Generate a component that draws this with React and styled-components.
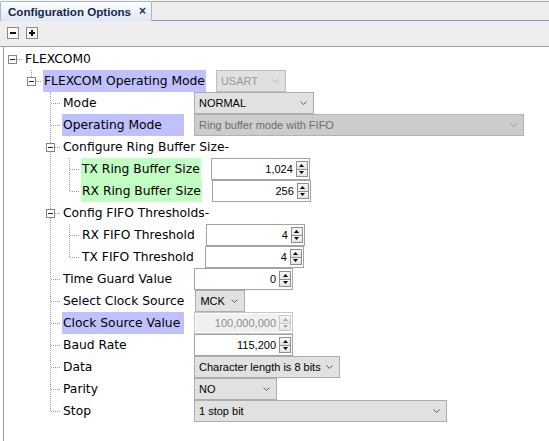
import React from "react"
import styled, { createGlobalStyle } from "styled-components"

const LINE = "#9b9b9b"

const GlobalStyle = createGlobalStyle`
  html, body {
    margin: 0;
    padding: 0;
    background: #fff;
  }
  body {
    font-family: "DejaVu Sans", Verdana, sans-serif;
  }
`

const Window = styled.div`
  width: 549px;
  height: 441px;
  overflow: hidden;
  background: #fff;
  display: flex;
  flex-direction: column;
`

const TabBar = styled.div`
  display: flex;
  height: 21px;
  padding-top: 1px;
  box-sizing: border-box;
  background: #f4f4f4;
`

const Tab = styled.div`
  display: flex;
  align-items: center;
  gap: 8px;
  height: 20px;
  box-sizing: border-box;
  padding: 0 5px 1px 7px;
  border: 1px solid #a7b7cf;
  border-bottom: none;
  border-radius: 2px 2px 0 0;
  background: linear-gradient(#fdfeff, #dfe7f3);
  font: bold 11.6px "Liberation Sans", Arial, sans-serif;
  color: #15284d;
  white-space: nowrap;
`

const Close = styled.span`
  font-size: 12px;
  color: #24324f;
`

const TabFill = styled.div`
  flex: 1;
  height: 20px;
  box-sizing: border-box;
  background: #eeeeee;
  border-top: 1px solid #a9a9a9;
  border-bottom: 1px solid #7d9cc2;
`

const Toolbar = styled.div`
  display: flex;
  align-items: flex-start;
  gap: 7px;
  height: 26px;
  box-sizing: border-box;
  padding: 6px 0 0 7px;
  background: #eeeeee;
  border-bottom: 1px solid #a0a0a0;
`

const ToolButton = styled.button`
  width: 12px;
  height: 12px;
  padding: 0;
  border: 1px solid #8a8a8a;
  background: #fbfbfb;
  display: grid;
  place-items: center;
  box-sizing: border-box;
`

const TreePanel = styled.div`
  flex: 1;
  margin-left: 3px;
  padding-top: 1px;
  border-left: 1px solid #8da2bf;
  background: #fff;
  display: flex;
  flex-direction: column;
`

const Row = styled.div`
  display: flex;
  height: 22px;
  flex: none;
`

const guideBg = (kind) => {
  const v = (len) =>
    `repeating-linear-gradient(to bottom, ${LINE} 0 1px, transparent 1px 2px) 8px 0 / 1px ${len}px no-repeat`
  const h = (from) =>
    `repeating-linear-gradient(to right, ${LINE} 0 1px, transparent 1px 2px) ${from}px 11px / ${19 - from}px 1px no-repeat`
  switch (kind) {
    case "l":
      return v(22)
    case "t":
      return `${h(9)}, ${v(22)}`
    case "e":
      return `${h(9)}, ${v(12)}`
    case "T":
      return `${h(13)}, ${v(22)}`
    case "E":
      return `${h(13)}, ${v(7)}`
    case "R":
      return h(13)
    default:
      return "none"
  }
}

const Guide = styled.span`
  flex: none;
  width: 19px;
  display: flex;
  align-items: flex-start;
  background: ${({ $kind }) => guideBg($kind)};
`

const ToggleBox = styled.svg`
  flex: none;
  margin: 7px 0 0 4px;
`

const Label = styled.span`
  flex: none;
  display: flex;
  align-items: center;
  box-sizing: border-box;
  min-width: ${({ $min }) => $min}px;
  margin-left: 1px;
  padding: 0 1px;
  background: ${({ $tint }) => $tint || "transparent"};
  font-size: 12.3px;
  color: #000;
  white-space: nowrap;
`

const tones = {
  normal: { bg: "#e1e1e1", border: "#adadad", color: "#000", arrow: "#5a5a5a" },
  muted: { bg: "#e0e0e0", border: "#bdbdbd", color: "#9a9a9a", arrow: "#b4b4b4" },
  dim: { bg: "#cccccc", border: "#b3b3b3", color: "#6e6e6e", arrow: "#9c9c9c" },
}

const SelectBox = styled.div`
  flex: none;
  width: ${({ $w }) => $w}px;
  height: 22px;
  margin-left: 10px;
  box-sizing: border-box;
  display: flex;
  align-items: center;
  justify-content: space-between;
  padding: 0 6px 0 4px;
  border: 1px solid ${({ $tone }) => tones[$tone].border};
  background: ${({ $tone }) => tones[$tone].bg};
  color: ${({ $tone }) => tones[$tone].color};
  font: 11px "Liberation Sans", Arial, sans-serif;
  white-space: nowrap;
`

const SpinBox = styled.div`
  flex: none;
  width: 99px;
  height: 22px;
  margin-left: 10px;
  box-sizing: border-box;
  display: flex;
  border: 1px solid ${({ $disabled }) => ($disabled ? "#c6c6c6" : "#a3a3a3")};
  background: #fff;
  font: 11px "Liberation Sans", Arial, sans-serif;
`

const SpinField = styled.span`
  flex: 1;
  display: flex;
  align-items: center;
  justify-content: flex-end;
  margin: ${({ $disabled }) => ($disabled ? "1px 0 1px 1px" : "0")};
  padding-right: 3px;
  background: ${({ $disabled }) => ($disabled ? "#f0f0f0" : "transparent")};
  color: ${({ $disabled }) => ($disabled ? "#8c8c8c" : "#000")};
`

const SpinButtons = styled.span`
  flex: none;
  width: 12px;
  margin: 2px 1px 2px 0;
  display: flex;
  flex-direction: column;
`

const SpinButton = styled.span`
  flex: 1;
  display: grid;
  place-items: center;
  border: 1px solid ${({ $disabled }) => ($disabled ? "#cacaca" : "#8e8e8e")};
  background: linear-gradient(#f7f7f7, #e4e4e4);
  & + & {
    border-top: none;
  }
`

const Minus = () => (
  <svg width="10" height="10" viewBox="0 0 10 10">
    <rect x="2" y="4" width="6" height="2" fill="#111" />
  </svg>
)

const Plus = () => (
  <svg width="10" height="10" viewBox="0 0 10 10">
    <rect x="2" y="4" width="6" height="2" fill="#111" />
    <rect x="4" y="2" width="2" height="6" fill="#111" />
  </svg>
)

const Toggle = () => (
  <ToggleBox width="9" height="9" viewBox="0 0 9 9">
    <rect x="0.5" y="0.5" width="8" height="8" fill="#fff" stroke="#858585" />
    <rect x="2" y="4" width="5" height="1" fill="#222" />
  </ToggleBox>
)

const Chevron = ({ color }) => (
  <svg width="7" height="4" viewBox="0 0 7 4">
    <polyline points="0.5,0.5 3.5,3.5 6.5,0.5" fill="none" stroke={color} strokeWidth="1" />
  </svg>
)

const Arrow = ({ up, color }) => (
  <svg width="5" height="3" viewBox="0 0 5 3">
    <path d={up ? "M0 3L2.5 0L5 3Z" : "M0 0L2.5 3L5 0Z"} fill={color} />
  </svg>
)

const Select = ({ value, width, tone = "normal" }) => (
  <SelectBox $w={width} $tone={tone}>
    <span>{value}</span>
    <Chevron color={tones[tone].arrow} />
  </SelectBox>
)

const Spinner = ({ value, disabled }) => (
  <SpinBox $disabled={disabled}>
    <SpinField $disabled={disabled}>{value}</SpinField>
    <SpinButtons>
      <SpinButton $disabled={disabled}>
        <Arrow up color={disabled ? "#a8a8a8" : "#000"} />
      </SpinButton>
      <SpinButton $disabled={disabled}>
        <Arrow color={disabled ? "#a8a8a8" : "#000"} />
      </SpinButton>
    </SpinButtons>
  </SpinBox>
)

const LAVENDER = "#c0c0fd"
const MINT = "#c2fdc2"

const rows = [
  { g: "R", label: "FLEXCOM0" },
  { g: "nE", label: "FLEXCOM Operating Mode", tint: LAVENDER, select: ["USART", 70, "muted"] },
  { g: "nnt", label: "Mode", select: ["NORMAL", 120] },
  { g: "nnt", label: "Operating Mode", tint: LAVENDER, select: ["Ring buffer mode with FIFO", 330, "dim"] },
  { g: "nnT", label: "Configure Ring Buffer Size-" },
  { g: "nnlt", label: "TX Ring Buffer Size", tint: MINT, spin: "1,024" },
  { g: "nnle", label: "RX Ring Buffer Size", tint: MINT, spin: "256" },
  { g: "nnT", label: "Config FIFO Thresholds-" },
  { g: "nnlt", label: "RX FIFO Threshold", spin: "4" },
  { g: "nnle", label: "TX FIFO Threshold", spin: "4" },
  { g: "nnt", label: "Time Guard Value", spin: "0" },
  { g: "nnt", label: "Select Clock Source", select: ["MCK", 50] },
  { g: "nnt", label: "Clock Source Value", tint: LAVENDER, spin: "100,000,000", disabled: true },
  { g: "nnt", label: "Baud Rate", spin: "115,200" },
  { g: "nnt", label: "Data", select: ["Character length is 8 bits", 146] },
  { g: "nnt", label: "Parity", select: ["NO", 83] },
  { g: "nne", label: "Stop", select: ["1 stop bit", 253] },
]

const TreeRow = ({ row }) => {
  const guides = row.g.split("")
  const labelLeft = 4 + 19 * guides.length + 1
  return (
    <Row>
      {guides.map((kind, i) => (
        <Guide key={i} $kind={kind}>
          {"TER".includes(kind) && <Toggle />}
        </Guide>
      ))}
      <Label $min={184 - labelLeft} $tint={row.tint}>
        {row.label}
      </Label>
      {row.select && <Select value={row.select[0]} width={row.select[1]} tone={row.select[2]} />}
      {row.spin && <Spinner value={row.spin} disabled={row.disabled} />}
    </Row>
  )
}

export default function App() {
  return (
    <>
      <GlobalStyle />
      <Window>
        <TabBar>
          <Tab>
            <span>Configuration Options</span>
            <Close>×</Close>
          </Tab>
          <TabFill />
        </TabBar>
        <Toolbar>
          <ToolButton aria-label="Collapse all">
            <Minus />
          </ToolButton>
          <ToolButton aria-label="Expand all">
            <Plus />
          </ToolButton>
        </Toolbar>
        <TreePanel>
          {rows.map((row) => (
            <TreeRow key={row.label} row={row} />
          ))}
        </TreePanel>
      </Window>
    </>
  )
}
